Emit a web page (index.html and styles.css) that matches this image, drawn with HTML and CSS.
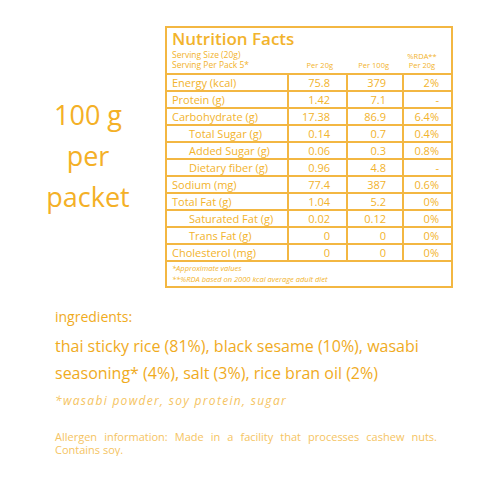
FILE: index.html
```html
<!DOCTYPE html>
<html lang="en">
    <head>
        <title>Nutrition Facts</title>
        <meta charset="utf-8">
        <meta name="viewport" content="width=device-width, initial-scale=1">
        <link rel="stylesheet" href="styles.css">
    </head>
    <body>
        <div class="top">
            <div class="per-pack">100 g<br>per<br>packet</div>
            <div class="facts">
                <table class="facts-table">
                    <colgroup>
                        <col class="col-name">
                        <col class="col-a">
                        <col class="col-b">
                        <col class="col-c">
                    </colgroup>
                    <thead>
                        <tr>
                            <th class="head-title">
                                <h3>Nutrition Facts</h3>
                                <div class="serving">Serving Size (20g)</div>
                                <div class="serving">Serving Per Pack 5*</div>
                            </th>
                            <th class="c2">Per 20g</th>
                            <th class="c3">Per 100g</th>
                            <th class="c4">%RDA**<br>Per 20g</th>
                        </tr>
                    </thead>
                    <tbody>
                        <tr><td>Energy (kcal)</td><td class="c2">75.8</td><td class="c3">379</td><td class="c4">2%</td></tr>
                        <tr><td>Protein (g)</td><td class="c2">1.42</td><td class="c3">7.1</td><td class="c4">-</td></tr>
                        <tr><td>Carbohydrate (g)</td><td class="c2">17.38</td><td class="c3">86.9</td><td class="c4">6.4%</td></tr>
                        <tr><td class="sub">Total Sugar (g)</td><td class="c2">0.14</td><td class="c3">0.7</td><td class="c4">0.4%</td></tr>
                        <tr><td class="sub">Added Sugar (g)</td><td class="c2">0.06</td><td class="c3">0.3</td><td class="c4">0.8%</td></tr>
                        <tr><td class="sub">Dietary fiber (g)</td><td class="c2">0.96</td><td class="c3">4.8</td><td class="c4">-</td></tr>
                        <tr><td>Sodium (mg)</td><td class="c2">77.4</td><td class="c3">387</td><td class="c4">0.6%</td></tr>
                        <tr><td>Total Fat (g)</td><td class="c2">1.04</td><td class="c3">5.2</td><td class="c4">0%</td></tr>
                        <tr><td class="sub">Saturated Fat (g)</td><td class="c2">0.02</td><td class="c3">0.12</td><td class="c4">0%</td></tr>
                        <tr><td class="sub">Trans Fat (g)</td><td class="c2">0</td><td class="c3">0</td><td class="c4">0%</td></tr>
                        <tr><td>Cholesterol (mg)</td><td class="c2">0</td><td class="c3">0</td><td class="c4">0%</td></tr>
                    </tbody>
                </table>
                <div class="notes">
                    <div>*Approximate values</div>
                    <div>**%RDA based on 2000 kcal average adult diet</div>
                </div>
            </div>
        </div>
        <div class="ingredients">
            <p class="ing-label">ingredients:</p>
            <p class="ing-list">thai sticky rice (81%), black sesame (10%), wasabi seasoning* (4%), salt (3%), rice bran oil (2%)</p>
            <p class="ing-note">*wasabi powder, soy protein, sugar</p>
            <p class="allergen">Allergen information: Made in a facility that processes cashew nuts. Contains soy.</p>
        </div>
    </body>
</html>
```
FILE: styles.css
```css
body{
margin: 0;
background: #fff;
color: #f2b32c;
font-family: "Open Sans", "Lato", sans-serif;
}
.top{
display: flex;
align-items: flex-start;
padding: 26px 0 0 27px;
}
.per-pack{
width: 122px;
margin: 68px 16px 0 0;
text-align: center;
font-size: 27px;
line-height: 41px;
color: #f4b026;
}
.facts{
width: 284px;
border: 2px solid #f3b742;
}
.facts-table{
width: 100%;
table-layout: fixed;
border-collapse: collapse;
font-size: 11px;
}
.col-name{
width: 121px;
}
.col-a{
width: 59px;
}
.col-b{
width: 56px;
}
.col-c{
width: 48px;
}
.facts-table th{
font-weight: normal;
font-size: 7.5px;
text-align: right;
vertical-align: bottom;
padding: 0 14px 3px 0;
border-bottom: 2px solid #f3b742;
line-height: 9px;
white-space: nowrap;
}
.facts-table th.c4{
padding-right: 10px;
text-align: center;
}
.facts-table .head-title{
text-align: left;
padding: 2px 0 3px 5px;
}
.head-title h3{
margin: 0 0 2px 0;
font-size: 17px;
line-height: 18px;
font-weight: 600;
}
.serving{
font-size: 8.5px;
line-height: 10px;
}
.facts-table td{
height: 15px;
padding: 0 16px 0 5px;
text-align: right;
border: 2px solid #f3b742;
border-top: none;
line-height: 15px;
white-space: nowrap;
}
.facts-table td:first-child{
text-align: left;
border-left: none;
}
.facts-table td:last-child{
border-right: none;
}
.facts-table .sub{
padding-left: 22px;
}
.facts-table td.c4{
padding-right: 12px;
}
.notes{
font-style: italic;
font-size: 7.5px;
line-height: 11px;
padding: 1px 0 1px 5px;
}
.ingredients{
padding: 19px 40px 0 55px;
}
.ingredients p{
margin: 0;
}
.ing-label{
font-size: 14px;
line-height: 20px;
color: #f0ab1e;
}
.ing-list{
margin-top: 6px !important;
font-size: 16px;
line-height: 27px;
color: #f0ab1e;
}
.ing-note{
margin-top: 5px !important;
font-size: 12px;
font-style: italic;
letter-spacing: 1.3px;
color: #f5c462;
}
.allergen{
margin-top: 21px !important;
font-size: 11px;
line-height: 13px;
text-align: justify;
width: 382px;
color: #f5c462;
}
```
